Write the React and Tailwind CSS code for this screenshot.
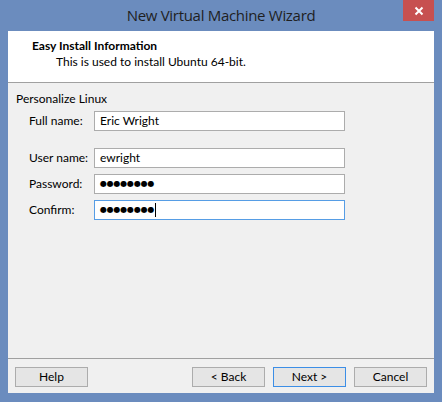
import React from 'react';

const font = { fontFamily: 'Lato, "Liberation Sans", sans-serif' };

const Field = ({ label, value, focused, secret }) => (
    <div className="flex items-center h-[20px]">
        <div className="w-[65px] text-[12px] text-black">{label}</div>
        <div
            className={`w-[251px] h-[20px] bg-white border flex items-center pl-[5px] text-[12px] text-black ${
                focused ? 'border-[#569de5]' : 'border-[#acacac]'
            }`}
        >
            {secret ? (
                <span className="text-[8px] tracking-[-0.2px] leading-none font-['DejaVu_Sans']">{value}</span>
            ) : (
                <span>{value}</span>
            )}
            {focused && <span className="w-[1px] h-[14px] bg-black ml-[1px]" />}
        </div>
    </div>
);

const Button = ({ children, active }) => (
    <button
        className={`w-[73px] h-[20px] bg-[#e5e5e5] border text-[12px] text-black leading-none ${
            active ? 'border-[#3c8ee6]' : 'border-[#acacac]'
        }`}
    >
        {children}
    </button>
);

export default function App() {
    return (
        <div className="w-[442px] h-[402px] bg-[#6b8cbe] flex flex-col" style={font}>
            {/* title bar */}
            <div className="relative h-[31px] flex items-center justify-center">
                <span className="text-[15px] text-[#1f1f1f] font-['Open_Sans'] tracking-[-0.3px] pb-[1px]">
                    New Virtual Machine Wizard
                </span>
                <div className="absolute top-0 right-[8px] w-[31px] h-[21px] bg-[#c75050] flex items-center justify-center">
                    <svg width="10" height="10" viewBox="0 0 10 10">
                        <path d="M1.5 1.5 L8.5 8.5 M8.5 1.5 L1.5 8.5" stroke="#fff" strokeWidth="2" />
                    </svg>
                </div>
            </div>

            <div className="flex-1 mx-[8px] mb-[9px] bg-[#f0f0f0] flex flex-col">
                {/* header */}
                <div className="h-[52px] bg-white border-b border-[#a0a0a0] pt-[7px] pl-[24px]">
                    <div className="text-[12px] font-bold leading-[16px] text-black">Easy Install Information</div>
                    <div className="text-[12px] leading-[16px] pl-[24px] text-black">
                        This is used to install Ubuntu 64-bit.
                    </div>
                </div>

                {/* form */}
                <div className="pt-[8px] pl-[8px]">
                    <div className="text-[12px] leading-[16px] text-black">Personalize Linux</div>
                    <div className="pl-[13px] pt-[4px] flex flex-col">
                        <Field label="Full name:" value="Eric Wright" />
                        <div className="h-[17px]" />
                        <div className="flex flex-col gap-[6px]">
                            <Field label="User name:" value="ewright" />
                            <Field label="Password:" value="●●●●●●●●" secret />
                            <Field label="Confirm:" value="●●●●●●●●" secret focused />
                        </div>
                    </div>
                </div>

                <div className="flex-1" />

                {/* footer */}
                <div className="border-t border-[#a0a0a0] h-[35px] pt-[8px] px-[7px] flex items-start">
                    <Button>Help</Button>
                    <div className="flex-1" />
                    <div className="flex gap-[8px]">
                        <Button>&lt; Back</Button>
                        <Button active>Next &gt;</Button>
                        <Button>Cancel</Button>
                    </div>
                </div>
            </div>
        </div>
    );
}
